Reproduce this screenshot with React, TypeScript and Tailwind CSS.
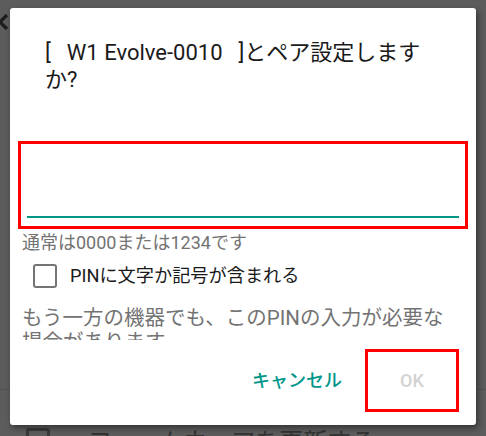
// PIN pairing dialog over a dimmed settings page

const FONT = "font-['Roboto','Noto_Sans_CJK_JP',sans-serif]";

function DimmedPage() {
  return (
    <div className="flex flex-col">
      {/* header row (mostly hidden by the dialog) */}
      <div className="h-[40px] shrink-0 flex items-start pt-[12px]">
        <svg width="20" height="20" viewBox="0 0 20 20" className="-ml-[10px]">
          <path d="M3 3 L17 17 M17 3 L3 17" stroke="#1c1c1c" strokeWidth="3.2" />
        </svg>
      </div>
      <div className="h-[350px] shrink-0 border-b border-[#525252]" />
      {/* list row peeking out below the dialog */}
      <div className="shrink-0 flex items-start gap-[38px] pl-[26px] pt-[38px]">
        <div className="w-[24px] h-[24px] border-[3px] border-[#3a3a3a] rounded-[3px]" />
        <span className="text-[24px] leading-[28px] text-[#333333]">ファームウェアを更新する</span>
      </div>
    </div>
  );
}

export default function App() {
  return (
    <div className={`relative w-full h-[436px] overflow-hidden bg-[#5c5c5c] ${FONT}`}>
      <DimmedPage />

      {/* Dialog */}
      <div className="absolute left-[10px] top-[8px] w-[466px] h-[417px] bg-white rounded-[3px] shadow-[2px_3px_6px_rgba(0,0,0,0.45)] flex flex-col">
        <h1 className="pt-[31px] pl-[35px] pr-[36px] text-[22px] leading-[27px] text-[#1a1a1a] font-normal">
          [<span className="px-[16px]">W1 Evolve-0010</span>]とペア設定しますか?
        </h1>

        {/* PIN input (highlighted) */}
        <div className="mt-[48px] mx-[8px] h-[88px] border-[3px] border-[#ff0000] flex flex-col justify-end px-[6px] pb-[8px]">
          <div className="h-[2px] bg-[#009688]" />
        </div>

        <div className="h-[111px] overflow-hidden">
          <p className="mt-[4px] pl-[12px] text-[18px] leading-[20px] text-[#737373]">
            通常は0000または1234です
          </p>
          <label className="mt-[11px] ml-[23px] flex items-center gap-[13px]">
            <span className="w-[24px] h-[24px] border-2 border-[#757575] rounded-[3px] shrink-0" />
            <span className="text-[18.2px] leading-[24px] text-[#1a1a1a]">PINに文字か記号が含まれる</span>
          </label>
          <p className="mt-[18px] pl-[12px] pr-[24px] text-[20.5px] leading-[24px] text-[#737373]">
            もう一方の機器でも、このPINの入力が必要な場合があります
          </p>
        </div>

        {/* actions */}
        <div className="mt-[9px] pr-[17px] flex items-center justify-end">
          <button className="mr-[23px] text-[18px] font-medium text-[#00968a]">キャンセル</button>
          <button className="w-[94px] h-[63px] border-[3px] border-[#ff0000] text-[18px] font-medium text-[#d2d2d2]">
            OK
          </button>
        </div>
      </div>
    </div>
  );
}
